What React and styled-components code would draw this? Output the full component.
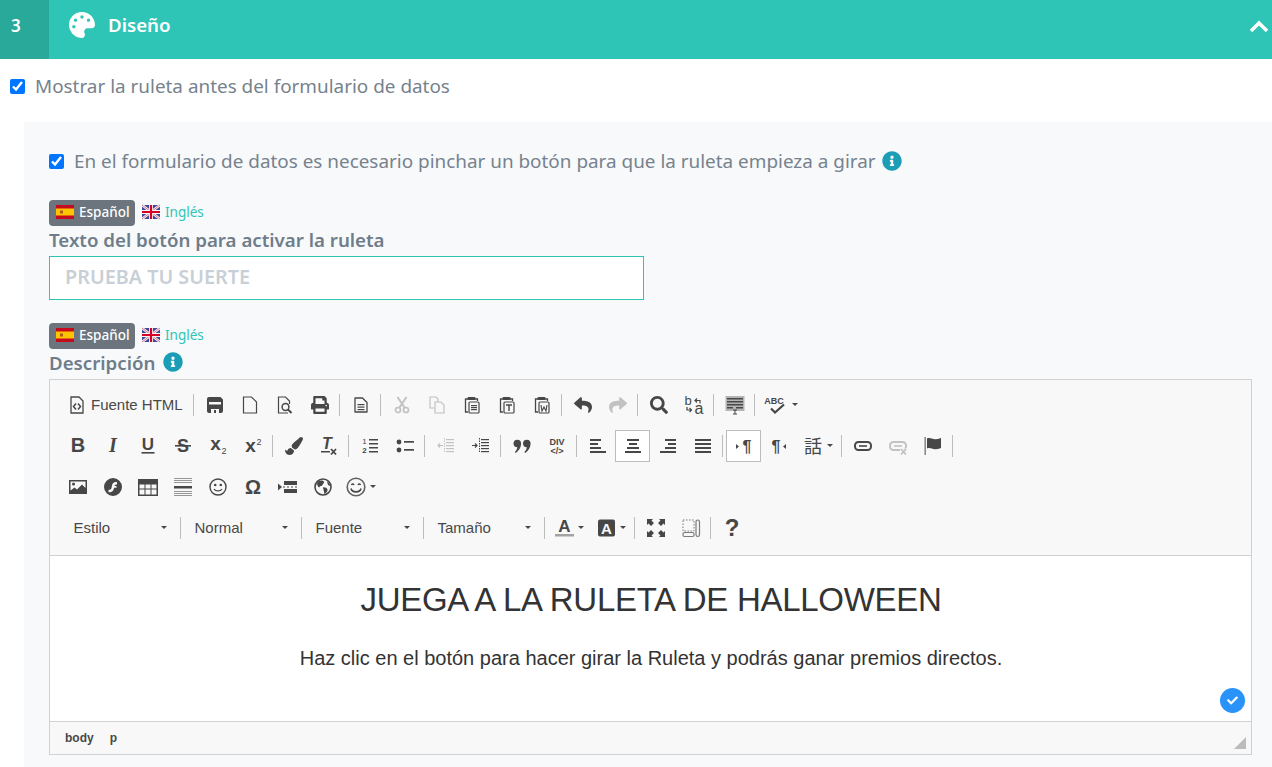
import React from 'react'
import styled, { createGlobalStyle } from 'styled-components'
import {
  FaPalette, FaInfoCircle, FaPrint, FaReply, FaShare, FaSearch, FaPaintBrush, FaCheck,
} from 'react-icons/fa'

const UI_FONT = '"Noto Sans", "Open Sans", sans-serif'
const EDITOR_FONT = '"Liberation Sans", Arial, sans-serif'

const GlobalStyle = createGlobalStyle`
  html, body {
    margin: 0;
    height: 767px;
    overflow: hidden;
    background: #fff;
    font-family: ${UI_FONT};
  }
  svg {
    overflow: visible;
  }
`

const Page = styled.div`
  display: flex;
  flex-direction: column;
  height: 767px;
`

const Header = styled.div`
  display: flex;
  align-items: center;
  flex: none;
  height: 59px;
  background: #2ec5b6;
  color: #fff;
`

const StepNumber = styled.div`
  display: flex;
  align-items: center;
  width: 38px;
  height: 51px;
  padding-left: 11px;
  padding-bottom: 8px;
  background: #28a999;
  font-size: 17px;
  font-weight: 600;
`

const HeaderIcon = styled(FaPalette)`
  width: 26px;
  height: 26px;
  margin: 0 14px 0 19px;
  position: relative;
  top: -5px;
  left: 1px;
`

const HeaderTitle = styled.div`
  flex: 1;
  font-size: 18.7px;
  font-weight: 600;
  position: relative;
  top: -5px;
`

const Chevron = styled.svg`
  width: 20px;
  height: 13px;
  margin-right: 3px;
  position: relative;
  top: -3px;
`

const CheckRow = styled.label`
  display: flex;
  align-items: center;
  gap: 10px;
  height: 22px;
  font-size: 18.9px;
  color: #76828d;
  margin: ${p => p.$margin};
`

const CheckInput = styled.input`
  width: 15px;
  height: 15px;
  margin: 0;
`

const InfoIcon = styled(FaInfoCircle)`
  width: 20px;
  height: 20px;
  color: #1b9db6;
  margin-left: ${p => p.$left || 0}px;
`

const Panel = styled.div`
  flex: 1;
  margin-left: 24px;
  padding: 28px 20px 0 25px;
  background: #f7f9fb;
`

const LangTabs = styled.div`
  display: flex;
  align-items: center;
  height: 26px;
  font-size: 13.5px;
  line-height: 24px;
`

const LangActive = styled.div`
  display: flex;
  align-items: center;
  gap: 5px;
  width: 86px;
  height: 26px;
  box-sizing: border-box;
  padding: 0 0 2px 7px;
  border-radius: 4px;
  background: #6c757d;
  color: #fff;
  font-weight: 500;
`

const LangOther = styled.div`
  display: flex;
  align-items: center;
  gap: 5px;
  margin-left: 7px;
  padding-bottom: 2px;
  color: #2ec5b6;
`

const FieldLabel = styled.div`
  display: flex;
  align-items: center;
  gap: 8px;
  height: 28px;
  box-sizing: border-box;
  padding-bottom: 2px;
  margin-bottom: 2px;
  font-size: 18.7px;
  font-weight: 600;
  color: #6f7d8a;
`

const TextField = styled.div`
  display: flex;
  align-items: center;
  width: 595px;
  height: 44px;
  box-sizing: border-box;
  padding: 0 0 4px 15px;
  margin-bottom: 23px;
  border: 1px solid #2ec5b6;
  background: #fff;
  font-size: 19.8px;
  font-weight: 600;
  color: #c9cfd6;
`

const Editor = styled.div`
  display: flex;
  flex-direction: column;
  height: 376px;
  box-sizing: border-box;
  border: 1px solid #d1d1d1;
  font-family: ${EDITOR_FONT};
  color: #474747;
`

const Toolbar = styled.div`
  flex: none;
  height: 176px;
  box-sizing: border-box;
  padding: 4px 0 0 10px;
  background: #f8f8f8;
  border-bottom: 1px solid #d1d1d1;
`

const ToolRow = styled.div`
  display: flex;
  align-items: center;
  height: 41px;
`

const ToolButton = styled.div`
  display: flex;
  align-items: center;
  justify-content: ${p => (p.$wide ? 'flex-start' : 'center')};
  flex: none;
  width: ${p => p.$width || 35}px;
  height: 32px;
  box-sizing: border-box;
  padding-left: ${p => p.$pad || 0}px;
  color: #474747;
  background: ${p => (p.$on ? '#fff' : 'transparent')};
  border: 1px solid ${p => (p.$on ? '#bcbcbc' : 'transparent')};
  opacity: ${p => (p.$off ? 0.3 : 1)};
`

const ToolLabel = styled.span`
  margin-left: 5px;
  font-size: 15px;
  color: #484848;
`

const ToolSep = styled.div`
  flex: none;
  width: 1px;
  height: 22px;
  margin: 0 3px 0 2px;
  background: #bcbcbc;
`

const ToolSpacer = styled.div`
  flex: none;
  width: 2px;
`

const Caret = styled.span`
  flex: none;
  width: 0;
  height: 0;
  margin-left: ${p => p.$left || 4}px;
  border-left: 3px solid transparent;
  border-right: 3px solid transparent;
  border-top: 3px solid #474747;
`

const Combo = styled.div`
  display: flex;
  align-items: center;
  justify-content: space-between;
  flex: none;
  width: ${p => p.$width}px;
  height: 22px;
  box-sizing: border-box;
  padding: 0 13px 0 13.5px;
  font-size: 15px;
  color: #484848;
`

const ComboSep = styled.div`
  flex: none;
  width: 1px;
  height: 22px;
  background: #bcbcbc;
`

const Content = styled.div`
  position: relative;
  flex: 1;
  background: #fff;
  color: #333;
  text-align: center;
`

const ContentTitle = styled.h1`
  margin: 24px 0 0 1px;
  font-size: 33px;
  line-height: 40px;
  font-weight: 400;
  letter-spacing: -0.3px;
`

const ContentText = styled.p`
  margin: 25px 0 0 1px;
  font-size: 20px;
  line-height: 26px;
`

const CheckBadge = styled.div`
  position: absolute;
  right: 6px;
  bottom: 8px;
  display: flex;
  align-items: center;
  justify-content: center;
  width: 25px;
  height: 25px;
  border-radius: 50%;
  background: #2a93fa;
  color: #fff;
  font-size: 11px;
`

const PathBar = styled.div`
  display: flex;
  align-items: center;
  flex: none;
  height: 33px;
  box-sizing: border-box;
  padding: 0 5px 0 15px;
  background: #f8f8f8;
  border-top: 1px solid #d1d1d1;
  font-size: 12px;
  font-weight: 700;
  color: #484848;
`

const PathItem = styled.span`
  margin-right: 12px;
  &:first-child {
    margin-right: 16px;
  }
`

const Resizer = styled.div`
  width: 12px;
  height: 12px;
  margin: 10px 0 0 auto;
  background: #bcbcbc;
  clip-path: polygon(100% 0, 100% 100%, 0 100%);
`

const Svg = ({ w = 18, children }) => (
  <svg width={w} height="18" viewBox={`0 0 ${w} 18`} fill="currentColor">
    {children}
  </svg>
)

const Txt = ({ x = 9, y = 15, s = 18, b = true, i, f = EDITOR_FONT, a = 'middle', children }) => (
  <text x={x} y={y} fontSize={s} fontWeight={b ? 700 : 400} fontStyle={i ? 'italic' : 'normal'} fontFamily={f} textAnchor={a}>
    {children}
  </text>
)

const Line = ({ d, w = 1.2 }) => <path d={d} fill="none" stroke="currentColor" strokeWidth={w} />

const Bars = ({ bars, h = 2 }) => bars.map(([x, y, w], n) => <rect key={n} x={x} y={y} width={w} height={h} />)

const clipboard = (
  <>
    <Line d="M5 3H2.5v13H5" w={1.3} />
    <Line d="M12 3h2.5v2" w={1.3} />
    <rect x="4.5" y="1" width="8" height="3" rx="1" />
    <rect x="6" y="6" width="10" height="11" rx="1" fill="none" stroke="currentColor" strokeWidth="1.2" />
  </>
)

const comma = 'M.5 4.5a3.8 3.8 0 1 1 7.6 0c0 4-2 7-5.3 9.5l-1-1c1.500-1.500 2.400-3 2.500-4.800A3.8 3.8 0 0 1 .5 4.5z'

const chain = (
  <>
    <rect x="1" y="5" width="16" height="8" rx="3.5" fill="none" stroke="currentColor" strokeWidth="2" />
    <rect x="5" y="8.2" width="8" height="1.6" />
  </>
)

const icons = {
  source: (
    <Svg>
      <path d="M3 1h8l4 4v12H3z" fill="none" stroke="currentColor" strokeWidth="1.3" />
      <Line d="M8 7.5 5.5 10.5 8 13.5M10 7.5l2.5 3-2.5 3" w={1.5} />
    </Svg>
  ),
  save: (
    <Svg>
      <path fillRule="evenodd" d="M3 1h11.5L17 3.500V15a2 2 0 0 1-2 2H3a2 2 0 0 1-2-2V3a2 2 0 0 1 2-2zM3 6v2.500h12V6zM5 13v4h8v-4zM8 14h2v3H8z" />
    </Svg>
  ),
  newdoc: (
    <Svg>
      <path d="M2.5 1h8L15.5 6v11h-13z" fill="none" stroke="currentColor" strokeWidth="1.2" />
    </Svg>
  ),
  preview: (
    <Svg>
      <path d="M12 17H2.5V1h7l4 4v3" fill="none" stroke="currentColor" strokeWidth="1.2" />
      <circle cx="9.5" cy="11" r="3.4" fill="none" stroke="currentColor" strokeWidth="1.5" />
      <Line d="m12 13.5 3.5 3.5" w={2} />
    </Svg>
  ),
  print: <FaPrint size={18} />,
  templates: (
    <Svg>
      <path d="M3 2h7.5L15 6.5V16H3z" fill="none" stroke="currentColor" strokeWidth="1.3" strokeLinejoin="round" />
      <Bars h={1.2} bars={[[5.5, 8, 7], [5.5, 10.5, 7], [5.5, 13, 7]]} />
    </Svg>
  ),
  cut: (
    <Svg>
      <Line d="M6.5 11.5 13.5 1M11.5 11.5 4.5 1" w={2} />
      <circle cx="5" cy="14" r="2.5" fill="none" stroke="currentColor" strokeWidth="1.7" />
      <circle cx="13" cy="14" r="2.5" fill="none" stroke="currentColor" strokeWidth="1.7" />
    </Svg>
  ),
  copy: (
    <Svg>
      <Line d="M6 12H2V1h6l2 2v3" />
      <path d="M7 6h6l3 3v8H7z" fill="none" stroke="currentColor" strokeWidth="1.2" />
    </Svg>
  ),
  paste: (
    <Svg>
      {clipboard}
      <Bars h={1.2} bars={[[8, 9, 6], [8, 11, 6], [8, 13, 6]]} />
    </Svg>
  ),
  pasteText: (
    <Svg>
      {clipboard}
      <Line d="M8 9h6M11 9v6" w={1.4} />
    </Svg>
  ),
  pasteWord: (
    <Svg>
      {clipboard}
      <Line d="M8 9l1 6 2-4 2 4 1-6" w={1.1} />
    </Svg>
  ),
  undo: <FaReply size={18} />,
  redo: <FaShare size={18} />,
  search: <FaSearch size={18} />,
  replace: (
    <Svg w={20}>
      <Txt x={4} y={9} s={13} b={false}>b</Txt>
      <Txt x={15} y={18} s={16} b={false}>a</Txt>
      <Line d="M11 4.5h5v3M13 2.5l-2 2 2 2" w={1.2} />
      <Line d="M3 11v3h4M5.5 12l2 2-2 2" w={1.2} />
    </Svg>
  ),
  selectAll: (
    <Svg w={20}>
      <rect x="0.5" y="0" width="19" height="15" fill="#b4b4b4" />
      <Bars bars={[[2, 2, 16], [2, 5, 16], [2, 8, 16], [2, 11, 6], [11, 11, 7]]} h={1.5} />
      <Line d="M8 14h4M10 14v4M8 18h4" w={1} />
    </Svg>
  ),
  spell: (
    <Svg w={22}>
      <Txt x={8} y={7.5} s={9}>ABC</Txt>
      <Line d="M5 12.5 9 16.5 18 8.5" w={2.2} />
    </Svg>
  ),
  bold: <Svg><Txt s={20}>B</Txt></Svg>,
  italic: <Svg><Txt s={20} i f='"Liberation Serif", serif'>I</Txt></Svg>,
  underline: (
    <Svg>
      <Txt s={17} y={13}>U</Txt>
      <rect x="2.5" y="15" width="13" height="1.6" />
    </Svg>
  ),
  strike: (
    <Svg>
      <Txt s={18} y={15}>S</Txt>
      <rect x="1" y="8" width="16" height="1.6" />
    </Svg>
  ),
  sub: (
    <Svg>
      <Txt x={6.5} y={13} s={19}>x</Txt>
      <Txt x={15} y={17} s={9} b={false}>2</Txt>
    </Svg>
  ),
  sup: (
    <Svg>
      <Txt x={6.5} y={15} s={19}>x</Txt>
      <Txt x={15} y={8} s={9} b={false}>2</Txt>
    </Svg>
  ),
  brush: <FaPaintBrush size={18} />,
  clear: (
    <Svg>
      <Txt x={7} y={12} s={16} i>T</Txt>
      <rect x="1" y="14" width="9" height="1.5" />
      <Line d="M11 12l5 5.500M16 12l-5 5.500" w={1.8} />
    </Svg>
  ),
  ol: (
    <Svg>
      <Txt x={3.5} y={7} s={8} b={false}>1</Txt>
      <Txt x={3.5} y={16} s={8}>2</Txt>
      <Bars h={1.5} bars={[[8, 2, 9], [8, 6, 9], [8, 10, 9], [8, 14, 9]]} />
    </Svg>
  ),
  ul: (
    <Svg>
      <circle cx="3" cy="5" r="2.4" />
      <circle cx="3" cy="13" r="2.4" />
      <Bars h={1.7} bars={[[8, 4, 10], [8, 12, 10]]} />
    </Svg>
  ),
  outdent: (
    <Svg>
      <Bars h={1.2} bars={[[9, 2, 8], [9, 5, 8], [9, 8, 8], [9, 11, 8], [9, 14, 8]]} />
      <path d="M7.5 1v15" fill="none" stroke="currentColor" strokeWidth="1" strokeDasharray="1.5 1" />
      <Line d="M6 8.5H1M3 6.5l-2 2 2 2" />
    </Svg>
  ),
  indent: (
    <Svg>
      <Bars h={1.2} bars={[[9, 2, 8], [9, 5, 8], [9, 8, 8], [9, 11, 8], [9, 14, 8]]} />
      <path d="M7.5 1v15" fill="none" stroke="currentColor" strokeWidth="1" strokeDasharray="1.5 1" />
      <Line d="M0 8.5h5M3 6.5l2 2-2 2" />
    </Svg>
  ),
  quote: (
    <Svg>
      <path d={comma} transform="translate(0 2)" />
      <path d={comma} transform="translate(9.5 2)" />
    </Svg>
  ),
  div: (
    <Svg>
      <Txt y={7.5} s={9}>DIV</Txt>
      <Txt y={16.5} s={9}>{'</>'}</Txt>
    </Svg>
  ),
  left: <Svg><Bars bars={[[1, 2, 11], [1, 6, 8], [1, 10, 11], [1, 14, 16]]} /></Svg>,
  center: <Svg><Bars bars={[[3, 2, 12], [5, 6, 8], [3, 10, 12], [1, 14, 16]]} /></Svg>,
  right: <Svg><Bars bars={[[6, 2, 11], [9, 6, 8], [6, 10, 11], [1, 14, 16]]} /></Svg>,
  justify: <Svg><Bars bars={[[1, 2, 16], [1, 6, 16], [1, 10, 16], [1, 14, 16]]} /></Svg>,
  ltr: (
    <Svg>
      <path d="M1 7l3 2.5L1 12z" />
      <Txt x={12} y={15} s={16}>¶</Txt>
    </Svg>
  ),
  rtl: (
    <Svg>
      <Txt x={6} y={15} s={16}>¶</Txt>
      <path d="M16 7l-3 2.5 3 2.5z" />
    </Svg>
  ),
  lang: (
    <Svg w={20}>
      <Txt x={10} y={16} s={18} b={false} f='"Noto Sans CJK JP", sans-serif'>話</Txt>
    </Svg>
  ),
  link: <Svg>{chain}</Svg>,
  unlink: (
    <Svg>
      {chain}
      <g stroke="#f8f8f8" strokeWidth="6"><path d="M11 14.5h7" /></g>
      <Line d="M12 12l5 5.5M17 12l-5 5.5" w={1.8} />
    </Svg>
  ),
  anchor: (
    <Svg>
      <rect x="0.5" y="0" width="1.4" height="18" opacity="0.7" />
      <path d="M3 1.5c3-1.200 5 .8 8 .8 2 0 4-.5 6-1.300v10c-2 .8-4 1.300-6 1.300-3 0-5-2-8-.8z" />
    </Svg>
  ),
  image: (
    <Svg>
      <path fillRule="evenodd" d="M0 2h18v14H0zM1.5 3.5v9l4-3 2.5 2 5-5 3.5 3.5V3.5z" />
      <circle cx="4.5" cy="6" r="1.5" />
    </Svg>
  ),
  flash: (
    <Svg>
      <path fillRule="evenodd" d="M9 0a9 9 0 1 1 0 18A9 9 0 0 1 9 0zM13 4c-3-.5-4.5 1-5 3.5L7.5 10c-.3 1.500-1.500 2-3 1.700v2.500c3 .5 4.800-1 5.300-3.500l.2-1h2.500V8h-2c.3-1.300 1-1.800 2.500-1.500z" />
    </Svg>
  ),
  table: (
    <Svg w={20}>
      <path fillRule="evenodd" d="M0 1h20v17H0zM1.5 6.5v4h5v-4zM7.5 6.5v4h5v-4zM13.5 6.5v4h5v-4zM1.5 11.5v5h5v-5zM7.5 11.5v5h5v-5zM13.5 11.5v5h5v-5z" />
    </Svg>
  ),
  hr: (
    <Svg>
      <g opacity="0.55">
        <Bars h={1} bars={[[0, 0, 18], [0, 2, 18], [0, 4, 18], [0, 13, 18], [0, 15, 18], [0, 17, 18]]} />
      </g>
      <rect x="0" y="8" width="18" height="2.5" />
    </Svg>
  ),
  smiley: (
    <Svg>
      <circle cx="9" cy="9" r="8" fill="none" stroke="currentColor" strokeWidth="1.4" />
      <circle cx="6.2" cy="7" r="1.3" />
      <circle cx="11.8" cy="7" r="1.3" />
      <Line d="M5 11c1.500 2.500 6.500 2.500 8 0" w={1.3} />
    </Svg>
  ),
  omega: <Svg><Txt s={20} y={16}>Ω</Txt></Svg>,
  pagebreak: (
    <Svg w={20}>
      <path d="M0 5.5 4 9 0 12.5z" />
      <path d="M6 3h13v4H6zM6 11h13v4H6z" />
      <Line d="M5 9h2M9 9h2M13 9h2M17 9h2" w={1} />
    </Svg>
  ),
  globe: (
    <Svg>
      <circle cx="9" cy="9" r="8" fill="none" stroke="currentColor" strokeWidth="1.6" />
      <path d="M4 3.500c2-1.500 5-1.500 6 0 .5 1.500-1 2-1.500 3.500S6 7.500 5.500 9 3 7.500 3 5.500zM9 9.500c1.500-.5 4 .5 4.500 2s-1.500 3.500-3 4.500c-.5-1.500-.5-3-1-4z" />
      <path d="M13 3.500c1.500.5 3 2.500 3 4.500l-2-1z" />
    </Svg>
  ),
  emoji: (
    <Svg w={20}>
      <circle cx="10" cy="9" r="8.8" fill="none" stroke="currentColor" strokeWidth="1.6" opacity="0.85" />
      <Line d="M5.5 7c.5-1.300 2-1.300 2.500 0M12 7c.5-1.300 2-1.300 2.500 0" w={1.4} />
      <Line d="M5 10.500c1 4.500 9 4.500 10 0" w={1.6} />
    </Svg>
  ),
  fontColor: (
    <Svg w={19}>
      <Txt x={9.5} y={13} s={17}>A</Txt>
      <rect x="0" y="15" width="19" height="2.5" fill="#a3a3a3" />
    </Svg>
  ),
  bgColor: (
    <Svg>
      <rect x="0" y="0.5" width="17" height="17" rx="2" />
      <g fill="#f8f8f8"><Txt x={8.5} y={14.5} s={15}>A</Txt></g>
    </Svg>
  ),
  maximize: (
    <Svg>
      <path d="M0 0h6L4.500 1.500 7 4 4 7 1.500 4.500 0 6zM18 0v6l-1.500-1.500L14 7l-3-3 2.500-2.500L12 0zM0 18v-6l1.500 1.500L4 11l3 3-2.500 2.500L6 18zM18 18h-6l1.500-1.500L11 14l3-3 2.500 2.500L18 12z" />
    </Svg>
  ),
  blocks: (
    <Svg>
      <g opacity="0.7">
        <path d="M1 1h11v11H1z" fill="none" stroke="currentColor" strokeWidth="1" strokeDasharray="1.5 1.5" />
        <rect x="1" y="13.5" width="11" height="4" rx="1.5" fill="none" stroke="currentColor" strokeWidth="1.2" />
        <rect x="14" y="1" width="3.5" height="16.5" rx="1.7" fill="none" stroke="currentColor" strokeWidth="1.2" />
      </g>
    </Svg>
  ),
  help: <Svg><Txt s={24} y={17}>?</Txt></Svg>,
}

const rows = [
  [
    { icon: 'source', label: 'Fuente HTML', width: 131, pad: 7 }, '|',
    { icon: 'save' }, { icon: 'newdoc' }, { icon: 'preview' }, { icon: 'print' }, '|',
    { icon: 'templates' }, '|',
    { icon: 'cut', off: true }, { icon: 'copy', off: true }, { icon: 'paste' }, { icon: 'pasteText' }, { icon: 'pasteWord' }, '|',
    { icon: 'undo' }, { icon: 'redo', off: true }, '|',
    { icon: 'search' }, { icon: 'replace' }, '|',
    { icon: 'selectAll' }, '|',
    { icon: 'spell', caret: true, width: 44, pad: 7 },
  ],
  [
    { icon: 'bold' }, { icon: 'italic' }, { icon: 'underline' }, { icon: 'strike' }, { icon: 'sub' }, { icon: 'sup' }, '|',
    { icon: 'brush' }, { icon: 'clear' }, '|',
    { icon: 'ol' }, { icon: 'ul' }, '|',
    { icon: 'outdent', off: true }, { icon: 'indent' }, '|',
    { icon: 'quote' }, { icon: 'div' }, '|',
    { icon: 'left' }, { icon: 'center', on: true }, { icon: 'right' }, { icon: 'justify' }, '|',
    { icon: 'ltr', on: true }, { icon: 'rtl' }, { icon: 'lang', caret: true, width: 43, pad: 6 }, '|',
    { icon: 'link' }, { icon: 'unlink', off: true }, { icon: 'anchor' }, '|',
  ],
  [
    { icon: 'image' }, { icon: 'flash' }, { icon: 'table' }, { icon: 'hr' }, { icon: 'smiley' }, { icon: 'omega' },
    { icon: 'pagebreak' }, { icon: 'globe' }, { icon: 'emoji', caret: true, width: 44, pad: 5 },
  ],
]

const lastRow = [
  { icon: 'fontColor', caret: true, width: 42.5, pad: 7 },
  { icon: 'bgColor', caret: true, width: 42.5, pad: 7 }, '|',
  { icon: 'maximize' }, { icon: 'blocks' }, '|',
  { icon: 'help' },
]

const combos = [
  { label: 'Estilo', width: 120 },
  { label: 'Normal', width: 120 },
  { label: 'Fuente', width: 121 },
  { label: 'Tamaño', width: 120 },
]

const Tool = ({ item }) => {
  if (item === '|') return <ToolSep />
  const wide = item.label || item.caret
  return (
    <ToolButton $on={item.on} $off={item.off} $width={item.width} $pad={item.pad} $wide={wide}>
      {icons[item.icon]}
      {item.label && <ToolLabel>{item.label}</ToolLabel>}
      {item.caret && <Caret />}
    </ToolButton>
  )
}

const SpainFlag = () => (
  <svg width="18" height="14" viewBox="0 0 18 14">
    <rect width="18" height="14" fill="#c60b1e" />
    <rect y="3.5" width="18" height="7" fill="#ffc400" />
    <rect x="4" y="5.5" width="3" height="3" fill="#ad5b1b" />
  </svg>
)

const UkFlag = () => (
  <svg width="18" height="14" viewBox="0 0 18 14">
    <rect width="18" height="14" fill="#41479b" />
    <path d="M0 0 18 14M18 0 0 14" stroke="#f5f5f5" strokeWidth="2.5" />
    <path d="M0 0 18 14M18 0 0 14" stroke="#d8566a" strokeWidth="0.8" />
    <path d="M9 0v14M0 7h18" stroke="#f5f5f5" strokeWidth="4" />
    <path d="M9 0v14M0 7h18" stroke="#d80027" strokeWidth="2.2" />
  </svg>
)

const LangSwitch = () => (
  <LangTabs>
    <LangActive><SpainFlag />Español</LangActive>
    <LangOther><UkFlag />Inglés</LangOther>
  </LangTabs>
)

const App = () => {
  return (
    <Page>
      <GlobalStyle />
      <Header>
        <StepNumber>3</StepNumber>
        <HeaderIcon />
        <HeaderTitle>Diseño</HeaderTitle>
        <Chevron viewBox="0 0 20 13">
          <path d="M2 11 10 3l8 8" fill="none" stroke="#fff" strokeWidth="3.5" />
        </Chevron>
      </Header>
      <CheckRow $margin="16px 0 25px 10px">
        <CheckInput type="checkbox" defaultChecked />
        Mostrar la ruleta antes del formulario de datos
      </CheckRow>
      <Panel>
        <CheckRow $margin="0 0 28px">
          <CheckInput type="checkbox" defaultChecked />
          <span>En el formulario de datos es necesario pinchar un botón para que la ruleta empieza a girar</span>
          <InfoIcon $left={-4} />
        </CheckRow>
        <LangSwitch />
        <FieldLabel>Texto del botón para activar la ruleta</FieldLabel>
        <TextField>PRUEBA TU SUERTE</TextField>
        <LangSwitch />
        <FieldLabel>Descripción <InfoIcon /></FieldLabel>
        <Editor>
          <Toolbar>
            {rows.map((row, r) => (
              <ToolRow key={r}>
                {row.map((item, n) => <Tool key={n} item={item} />)}
              </ToolRow>
            ))}
            <ToolRow>
              {combos.map(c => (
                <React.Fragment key={c.label}>
                  <Combo $width={c.width}>{c.label}<Caret /></Combo>
                  <ComboSep />
                </React.Fragment>
              ))}
              <ToolSpacer />
              {lastRow.map((item, n) => <Tool key={n} item={item} />)}
            </ToolRow>
          </Toolbar>
          <Content>
            <ContentTitle>JUEGA A LA RULETA DE HALLOWEEN</ContentTitle>
            <ContentText>Haz clic en el botón para hacer girar la Ruleta y podrás ganar premios directos.</ContentText>
            <CheckBadge><FaCheck /></CheckBadge>
          </Content>
          <PathBar>
            <PathItem>body</PathItem>
            <PathItem>p</PathItem>
            <Resizer />
          </PathBar>
        </Editor>
      </Panel>
    </Page>
  )
}

export default App
